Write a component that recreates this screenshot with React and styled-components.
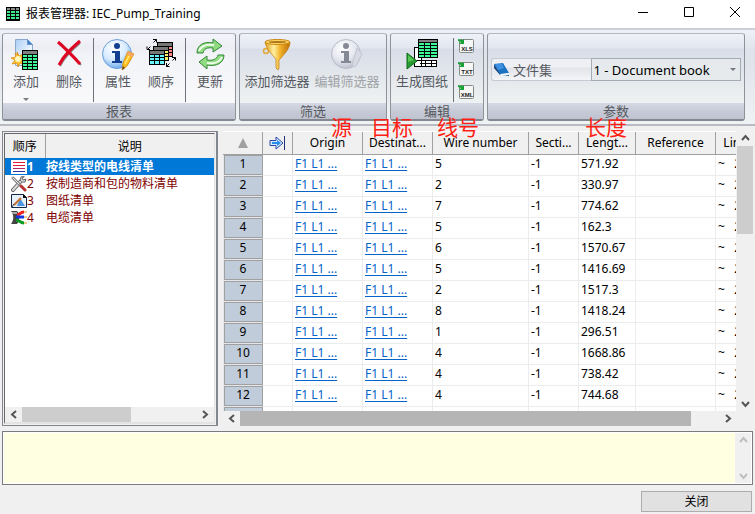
import React from "react";
import styled, { createGlobalStyle, css } from "styled-components";

const GlobalStyle = createGlobalStyle`
  * { box-sizing: border-box; }
  body { margin: 0; background: #f0f0f0; }
  body, button, select, textarea, table {
    font-family: "Noto Sans", "Noto Sans CJK SC", sans-serif;
    font-size: 12px;
    color: #000;
  }
`;

const Window = styled.div`
  display: flex;
  flex-direction: column;
  height: 100vh;
  overflow: hidden;
  background: #f0f0f0;
`;

/* Title bar */
const TitleBar = styled.header`
  display: flex;
  align-items: center;
  flex: none;
  height: 28px;
  padding-left: 6px;
  gap: 6px;
  background: #fff;
`;
const Title = styled.h1`
  flex: 1;
  margin: 0;
  font-size: 12px;
  line-height: 24px;
  font-weight: 400;
`;
const WindowButton = styled.button`
  display: grid;
  place-items: center;
  width: 46px;
  height: 24px;
  padding: 0;
  border: 0;
  background: none;
`;
const WindowButtons = styled.div`
  display: flex;
  align-self: flex-start;
  margin-right: -3px;
`;

/* Ribbon */
const Ribbon = styled.div`
  display: flex;
  flex: none;
  gap: 3px;
  height: 98px;
  padding: 3px 10px 3px 2px;
  border-top: 2px solid #cbcfd8;
  border-bottom: 2px solid #b9bbc3;
  background: linear-gradient(#eef1f7, #dfe3ec 20px, #dfe3ea 30px, #f0f3f4);
`;
const Group = styled.section`
  display: flex;
  flex-direction: column;
  flex: ${(p) => (p.$grow ? 1 : "none")};
  width: ${(p) => (p.$width ? `${p.$width}px` : "auto")};
  border: 1px solid #8f9299;
  border-top-color: #b4b7bf;
  border-bottom: 2px solid #85878e;
  border-radius: 3px;
  background: ${(p) =>
    p.$bright
      ? "linear-gradient(#f3f5fa, #eceef4 14px, #f2f3f7 20px, #fbfbfc)"
      : "linear-gradient(#eff2f9, #e2e6f0 14px, #d8dde8 15px, #e3e7ec 40px, #eff3f2 72px)"};
`;
const GroupBody = styled.div`
  display: flex;
  flex: 1;
  gap: ${(p) => p.$gap || 1}px;
  padding: 4px 3px 0 ${(p) => p.$left || 2}px;
  align-items: ${(p) => (p.$center ? "center" : "flex-start")};
`;
const GroupCaption = styled.h2`
  flex: none;
  height: 16px;
  margin: 0;
  font-size: 13px;
  line-height: 16px;
  font-weight: 400;
  text-align: center;
  color: #55595f;
  background: linear-gradient(#d5d9e4, #c7cbd7 8px, #bfc3cf);
`;
const ToolButton = styled.button`
  display: flex;
  flex-direction: column;
  align-items: center;
  width: ${(p) => p.$width || 42}px;
  padding: 0;
  border: 0;
  background: none;
  font-size: 13px;
  line-height: 20px;
  white-space: nowrap;
  color: ${(p) => (p.disabled ? "#a0a3a8" : "#55595f")};
  svg { flex: none; }
`;
const ToolLabel = styled.span`
  margin-top: 1px;
`;
const DropMark = styled.span`
  margin-top: 7px;
  border: 3px solid transparent;
  border-top-color: #77797e;
  border-bottom: 0;
`;
const Divider = styled.span`
  flex: none;
  width: 1px;
  height: 64px;
  margin: 0 ${(p) => p.$space || 2}px;
  background: #6f727c;
`;
const ExportList = styled.div`
  display: flex;
  flex-direction: column;
  gap: 7px;
`;
const ExportButton = styled.button`
  display: block;
  width: 17px;
  height: 16px;
  padding: 0;
  border: 0;
  background: none;
  svg { display: block; }
`;
const Field = styled.div`
  display: flex;
  flex: 1;
  height: 23px;
  margin-bottom: 2px;
`;
const FieldLabel = styled.label`
  display: flex;
  align-items: center;
  flex: 2;
  gap: 3px;
  padding-left: 1px;
  border: 1px solid #c6cad2;
  border-right: 0;
  border-radius: 3px 0 0 3px;
  background: linear-gradient(#eff0f4 0 8px, #e2e4ea 9px, #f4f5f8);
  font-size: 13px;
  color: #55595f;
`;
const SelectWrap = styled.div`
  display: flex;
  flex: 3;
  align-items: center;
  border: 1px solid #a4abb5;
  background: #e6eaec;
  select {
    appearance: none;
    flex: 1;
    min-width: 0;
    height: 21px;
    padding: 0 0 0 1px;
    border: 0;
    background: none;
    font-size: 13px;
  }
  ${DropMark} { margin: 0 4px 0 0; }
`;

/* Work area */
const Main = styled.main`
  display: flex;
  flex: 1;
  min-height: 0;
  gap: 5px;
  padding: 5px 2px 5px 2px;
`;
const ReportPanel = styled.div`
  display: flex;
  flex-direction: column;
  flex: none;
  width: 216px;
  border: 1px solid #83878f;
  border-right: 2px solid #83878f;
  padding: 1px;
`;
const ReportFrame = styled.div`
  display: flex;
  flex-direction: column;
  flex: 1;
  min-height: 0;
  border-left: 1px solid #696969;
  border-top: 1px solid #696969;
  border-right: 1px solid #e3e3e3;
  border-bottom: 2px solid #e3e3e3;
  background: #fff;
`;
const ReportBody = styled.div`
  flex: 1;
  min-height: 0;
  overflow: hidden;
`;
const ReportTable = styled.table`
  width: 100%;
  table-layout: fixed;
  border-collapse: collapse;
  th {
    height: 24px;
    padding: 0;
    font-weight: 400;
    background: #f0f0f0;
  }
  th:first-child { border-right: 1px solid #a0a0a0; }
  td { height: 17px; padding: 0 0 0 1px; line-height: 17px; white-space: nowrap; }
`;
const ReportRow = styled.tr`
  color: ${(p) => (p.$selected ? "#fff" : "#800000")};
  font-weight: ${(p) => (p.$selected ? 700 : 400)};
  background: ${(p) => (p.$selected ? "#0078d7" : "transparent")};
`;
const ReportNumber = styled.span`
  display: flex;
  align-items: center;
  height: 17px;
  padding-left: 5px;
`;

const GridArea = styled.div`
  position: relative;
  display: flex;
  flex-direction: column;
  flex: 1;
  min-width: 0;
`;
const GridRow = styled.div`
  display: flex;
  flex: 1;
  min-height: 0;
`;
const GridView = styled.div`
  flex: 1;
  min-width: 0;
  overflow: hidden;
  background: #fff;
  border-top: 1px solid #fff;
  border-right: 1px solid #f0f0f0;
`;
const WireTable = styled.table`
  width: 560px;
  table-layout: fixed;
  border-collapse: separate;
  border-spacing: 0;
  th, td { padding: 0; overflow: hidden; white-space: nowrap; }
  thead th {
    height: 23px;
    font-weight: 400;
    line-height: 20px;
    background: #f0f0f0;
    border-right: 1px solid #a0a0a0;
    border-bottom: 1px solid #a0a0a0;
  }
  thead svg { display: block; margin: 0 auto; }
  tbody th {
    height: 21px;
    border-left: 1px solid #e3e6ea;
    border-right: 1px solid #a0a0a0;
    border-bottom: 1px solid #e3e6ea;
    box-shadow: inset 1px 1px #a0a0a0, inset 0 -1px #a0a0a0;
    font-weight: 400;
    line-height: 18px;
    vertical-align: top;
    background: #c0ccda;
  }
  td {
    height: 21px;
    padding-left: 2px;
    line-height: 18px;
    vertical-align: top;
    border-right: 1px solid #ececec;
    border-bottom: 1px solid #ececec;
  }
  a { color: #0563c9; text-decoration: underline; text-underline-offset: 2px; }
`;
const LineTypeCell = styled.td`
  && { white-space: pre; }
`;
const Notes = styled.div`
  position: absolute;
  left: 0;
  top: -16px;
  display: grid;
  grid-template-columns: 108px 40px 66px 148px 50px;
  font-size: 21px;
  line-height: 24px;
  color: #ff1e14;
  pointer-events: none;
  white-space: nowrap;
`;
const Note = styled.span`
  grid-column: ${(p) => p.$col};
`;

/* Scroll bars */
const Scroll = styled.div`
  display: flex;
  flex: none;
  background: #f0f0f0;
  ${(p) =>
    p.$vertical
      ? css`flex-direction: column; width: 16px;`
      : css`height: 15px; margin-right: ${p.$end || 0}px;`}
`;
const ScrollButton = styled.button`
  display: grid;
  place-items: center;
  flex: none;
  width: 17px;
  height: 15px;
  padding: 0;
  border: 0;
  background: none;
  color: ${(p) => (p.disabled ? "#bfbfbf" : "#555")};
`;
const Track = styled.div`
  display: flex;
  flex: 1;
  flex-direction: ${(p) => (p.$vertical ? "column" : "row")};
`;
const Thumb = styled.div`
  flex: 0 0 ${(p) => p.$size};
  background: ${(p) => (p.$dark ? "#b5b5b5" : "#cdcdcd")};
`;

/* Footer */
const MessageBox = styled.div`
  display: flex;
  flex: none;
  height: 54px;
  margin: 0 2px;
  border: 1px solid #7a7c80;
  padding: 1px;
  background: #fff;
  textarea {
    flex: 1;
    min-width: 0;
    border: 0;
    resize: none;
    outline: 0;
    background: #ffffe1;
  }
`;
const Footer = styled.footer`
  display: flex;
  justify-content: flex-end;
  flex: none;
  padding: 6px 3px 2px;
`;
const CloseButton = styled.button`
  width: 111px;
  height: 21px;
  padding: 0;
  border: 1px solid #adadad;
  background: #e1e1e1;
  line-height: 19px;
`;

const SHEET_ROWS = [0, 1, 2, 3, 4];

const SheetIcon = ({ x = 0, y = 0 }) => (
  <g transform={`translate(${x} ${y})`} shapeRendering="crispEdges">
    <rect width="16" height="20" fill="#000" />
    <rect x="1" y="1" width="14" height="3" fill="#808080" />
    {SHEET_ROWS.map((r) =>
      [1, 6, 11].map((c) => (
        <rect key={`${r}${c}`} x={c} y={5 + r * 3} width="4" height="2" fill="#3dfa98" />
      ))
    )}
  </g>
);

const AppIcon = () => (
  <svg width="14" height="14" viewBox="0 0 14 14" shapeRendering="crispEdges">
    <rect width="14" height="14" fill="#000" />
    <path d="M1 1h3v2H1zM5 1h4v2H5zM10 1h3v2h-3z" fill="#8a8a8a" />
    {[4, 7, 10].map((y) => (
      <path key={y} d={`M1 ${y}h3v2H1zM5 ${y}h4v2H5zM10 ${y}h3v2h-3z`} fill="#3dea90" />
    ))}
  </svg>
);

const AddIcon = () => (
  <svg width="32" height="32" viewBox="0 0 32 32">
    <defs>
      <linearGradient id="page" x1="0" y1="0" x2="1" y2="1">
        <stop offset="0" stopColor="#aacdf6" />
        <stop offset=".6" stopColor="#e9f4ff" />
        <stop offset="1" stopColor="#fff" />
      </linearGradient>
    </defs>
    <path d="M5.500 1.500h12l5 5v21h-17z" fill="url(#page)" stroke="#8ba9cf" />
    <path d="M17.500 1.500v5h5z" fill="#3f83d3" stroke="#6b94c9" />
    <path d="M7 14l2 4 4-2-1 4 5 1-5 2 2 4-4-2-2 4-1-4-5 1 3-4-4-2 5-1-1-4 3 2z" fill="#ffc52b" stroke="#de8a17" strokeWidth=".8" />
    <circle cx="8" cy="21" r="3" fill="#fff7bd" />
    <SheetIcon x={12} y={12} />
  </svg>
);

const DeleteIcon = () => (
  <svg width="32" height="32" viewBox="0 0 32 32" fill="none">
    <path d="M7 5l21 22M27 5C20 11 12 18 7 28" stroke="#888" strokeWidth="2" />
    <path d="M5 4c7 6 14 13 22 22" stroke="#df0824" strokeWidth="3" />
    <path d="M27 3C19 10 11 17 6 27" stroke="#df0824" strokeWidth="3" />
  </svg>
);

const InfoIcon = ({ muted }) => (
  <svg width="34" height="32" viewBox="0 0 34 32">
    <defs>
      <radialGradient id={muted ? "ballGrey" : "ballBlue"} cx=".4" cy=".3" r=".75">
        <stop offset="0" stopColor="#fff" />
        <stop offset=".55" stopColor={muted ? "#e6e8f0" : "#d8ebff"} />
        <stop offset="1" stopColor={muted ? "#b9bdca" : "#5ca2e8"} />
      </radialGradient>
    </defs>
    <circle cx="16" cy="16" r="14.500" fill={`url(#${muted ? "ballGrey" : "ballBlue"})`} stroke={muted ? "#b9bcc8" : "#6c9fd8"} />
    <circle cx="16" cy="8" r="3" fill={muted ? "#858996" : "#133f91"} />
    <path d="M11 13h8v10h2v2H11v-2h3v-8h-3z" fill={muted ? "#858996" : "#133f91"} />
    {muted ? (
      <path d="M27 10l5 6-6 12-4 1 1-6z" fill="#d7d9e3" stroke="#bdc0cc" strokeWidth=".8" />
    ) : (
      <g>
        <path d="M27 13l6 3-7 12-5 4 1-7z" fill="#ffbf1e" stroke="#d48a0f" strokeWidth=".8" />
        <path d="M27 13l6 3-2 3-6-3z" fill="#f3a565" />
        <path d="M21 32l1-4 2 2z" fill="#634315" />
        <path d="M28 18l-4 8" stroke="#ffe578" strokeWidth="1.500" />
      </g>
    )}
  </svg>
);

const MiniSheet = ({ x, y, fill }) => (
  <g transform={`translate(${x} ${y})`} shapeRendering="crispEdges">
    <rect width="16" height="15" fill="#000" />
    <rect x="1" y="1" width="14" height="3" fill="#777" />
    {[5, 8, 11].map((r) =>
      [1, 6, 11].map((c) => (
        <rect key={`${r}${c}`} x={c} y={r} width="4" height={r === 11 ? 3 : 2} fill={fill} />
      ))
    )}
  </g>
);

const OrderIcon = () => (
  <svg width="32" height="32" viewBox="0 0 32 32">
    <MiniSheet x={12} y={4} fill="#ff8585" />
    <MiniSheet x={8} y={8} fill="#fff06a" />
    <MiniSheet x={4} y={12} fill="#68f4ff" />
    <g fill="none" stroke="#000" strokeDasharray="2 0">
      <path d="M2.500 11.500l3-3M2 8.500v3h3M8.500 4.500l3-3M8 1.500h3.500v3" />
      <path d="M21.500 28.500l3-3M21.500 25v3.500h3M27.500 22.500l3-3M27 19.500h3.500v3" />
    </g>
  </svg>
);

const RefreshIcon = () => (
  <svg width="32" height="32" viewBox="0 0 32 32" fill="#8fdc80" stroke="#34853a" strokeLinejoin="round">
    <path d="M3 15C3 7 10 3 19 5V1l9 7-9 6v-4C13 9 10 11 9 15z" />
    <path d="M30 17c0 8-8 12-17 10v4l-8-7 8-6v4c6 1 10-1 11-5z" />
    <path d="M5 13c2-5 8-7 15-6M28 19c-2 5-8 7-15 6" fill="none" stroke="#effbea" strokeWidth="2" />
  </svg>
);

const FunnelIcon = () => (
  <svg width="32" height="32" viewBox="0 0 32 32">
    <defs>
      <linearGradient id="brass">
        <stop offset="0" stopColor="#e29b19" />
        <stop offset=".35" stopColor="#fff0a0" />
        <stop offset=".6" stopColor="#f4b42c" />
        <stop offset="1" stopColor="#b96d04" />
      </linearGradient>
    </defs>
    <circle cx="5" cy="13" r="2.500" fill="none" stroke="#e3a83a" strokeWidth="1.500" />
    <path d="M4 4c1 6 5 10 10 16l1 2v8l2 2 1-2v-8l2-2c5-6 9-10 9-16z" fill="url(#brass)" stroke="#c17c0d" strokeWidth=".7" />
    <ellipse cx="16.500" cy="4" rx="12.500" ry="2.500" fill="#ffd663" stroke="#c88715" />
    <ellipse cx="16.500" cy="4" rx="9" ry="1" fill="#ad7617" />
  </svg>
);

const DrawingIcon = () => (
  <svg width="32" height="32" viewBox="0 0 32 32">
    <g shapeRendering="crispEdges">
      <path d="M8.500 9.500h7v19h-7zM8.500 22.500h22v6h-22M14 25.500h16M19.500 22v6M25.500 22v6" fill="#fff" stroke="#000" />
      <rect x="12" y="1" width="20" height="19" />
      <path d="M13 2h18v2H13z" fill="#808080" />
      {[5, 8, 11, 14, 17].map((y) => (
        <path key={y} d={`M13 ${y}h5v2h-5zM19 ${y}h5v2h-5zM25 ${y}h6v2h-6z`} fill="#3dfa98" />
      ))}
    </g>
    <path d="M1 15l10 8-10 8z" fill="#279b31" stroke="#11691b" />
    <path d="M2 17l6 5-6 2z" fill="#5ac653" />
  </svg>
);

const ExportIcon = ({ label }) => (
  <svg width="17" height="16" viewBox="0 0 17 16">
    <rect x="2.500" y="1.500" width="14" height="13" rx="1" fill="#f5f6f5" stroke="#858b87" />
    <path d="M1 1l5 1 1-1v5H2l2-2-3-1z" fill="#19a135" />
    <text x="10" y="13" textAnchor="middle" fontFamily="Liberation Sans, sans-serif" fontSize="6" fontWeight="700" fill="#222">
      {label}
    </text>
  </svg>
);

const BookIcon = () => (
  <svg width="17" height="16" viewBox="0 0 17 16">
    <path d="M1 2v4l6 7 9 1v-2L7 11z" fill="#14467b" />
    <path d="M1 2l9-1 6 10-9 1z" fill="#1c72c3" />
    <path d="M2 2l7 0 2 4-6 2z" fill="#3f90e0" />
    <path d="M7 12l9-1v2l-8 1z" fill="#f2f7fc" />
  </svg>
);

const WireListIcon = () => (
  <svg width="16" height="14" viewBox="0 0 16 14" shapeRendering="crispEdges">
    <path d="M0 0h16v14H0z" fill="#fff" />
    <path d="M2 2h12v1H2zM2 5h12v1H2z" fill="#e01c3a" />
    <path d="M2 8h12v1H2z" fill="#b42b62" />
    <path d="M2 11h12v1H2z" fill="#26359b" />
  </svg>
);
const ToolsIcon = () => (
  <svg width="16" height="16" viewBox="0 0 16 16" fill="none" strokeLinecap="round">
    <path d="M2 14l8-9" stroke="#666" strokeWidth="4" />
    <path d="M2 14l8-9" stroke="#ddd" strokeWidth="2" />
    <path d="M10 1c-2 3 0 6 4 5l1-3-3 1-1-2 2-1z" fill="#d7dadd" stroke="#666" />
    <path d="M2 2l6 6" stroke="#888" strokeWidth="3" />
    <path d="M2 2l6 6" stroke="#e7e7e7" />
    <path d="M10 10l4 4" stroke="#b83131" strokeWidth="3" />
  </svg>
);
const SketchIcon = () => (
  <svg width="16" height="14" viewBox="0 0 16 14">
    <path d="M.5.500h12l3 3v10H.500z" fill="#e6f1fc" stroke="#172949" />
    <path d="M12 0v4h4z" fill="#111" />
    <path d="M9 4l5 8H6z" fill="#4d95dc" />
    <path d="M3 11l7-7" stroke="#c86e28" strokeWidth="2" />
    <path d="M1 13l2-3" stroke="#333" />
  </svg>
);
const CableIcon = () => (
  <svg width="16" height="15" viewBox="0 0 16 15" fill="none">
    <path d="M0 1h6c3 3 3 9 0 13H0c3-4 3-9 0-13z" fill="#444" />
    <path d="M1 3h5" stroke="#aaa" strokeWidth="2" />
    <path d="M6 5c3 0 3-3 7-3" stroke="#f02020" strokeWidth="3" />
    <path d="M5 7h8" stroke="#1238e0" strokeWidth="3" />
    <path d="M5 10c3 0 4 3 8 3" stroke="#0b9b22" strokeWidth="3" />
    <path d="M13 2h3M13 7h3M13 13h3" stroke="#dd9b24" />
  </svg>
);

const SortIcon = () => (
  <svg width="12" height="10" viewBox="0 0 12 10">
    <path d="M6 0l5 10H1z" fill="#a0a0a0" />
  </svg>
);
const JumpIcon = () => (
  <svg width="17" height="14" viewBox="0 0 17 14">
    <path d="M1 4.500h6V1l7 6-7 6V9.500H1z" fill="#dcecff" stroke="#2747a8" />
    <path d="M3 6h5V4l4 3-4 3V8H3z" fill="#278cea" />
    <path d="M15.500 0v14" stroke="#20307d" />
  </svg>
);

const CHEVRONS = {
  left: "M7 1L3 4.500 7 8",
  right: "M2 1l4 3.500L2 8",
  up: "M1 6l3.500-4L8 6",
  down: "M1 3l3.500 4L8 3",
};
const Chevron = ({ dir }) => (
  <svg width="9" height="9" viewBox="0 0 9 9">
    <path d={CHEVRONS[dir]} fill="none" stroke="currentColor" strokeWidth="2" />
  </svg>
);

const reports = [
  [WireListIcon, "按线类型的电线清单"],
  [ToolsIcon, "按制造商和包的物料清单"],
  [SketchIcon, "图纸清单"],
  [CableIcon, "电缆清单"],
];

const wires = [
  ["5", "571.92"],
  ["2", "330.97"],
  ["7", "774.62"],
  ["5", "162.3"],
  ["6", "1570.67"],
  ["5", "1416.69"],
  ["2", "1517.3"],
  ["8", "1418.24"],
  ["1", "296.51"],
  ["4", "1668.86"],
  ["4", "738.42"],
  ["4", "744.68"],
  ["", ""],
];

const columnWidths = [40, 30, 70, 70, 96, 50, 57, 80, 67];

export default function App() {
  return (
    <Window>
      <GlobalStyle />
      <TitleBar>
        <AppIcon />
        <Title>报表管理器: IEC_Pump_Training</Title>
        <WindowButtons>
          <WindowButton aria-label="最小化">
            <svg width="11" height="11"><path d="M0 5.500h10" stroke="#000" /></svg>
          </WindowButton>
          <WindowButton aria-label="最大化">
            <svg width="11" height="11"><path d="M.5.500h9v9h-9z" fill="none" stroke="#000" /></svg>
          </WindowButton>
          <WindowButton aria-label="关闭窗口">
            <svg width="11" height="11"><path d="M0 0l10 10M10 0L0 10" stroke="#000" /></svg>
          </WindowButton>
        </WindowButtons>
      </TitleBar>

      <Ribbon>
        <Group $width={234} $bright>
          <GroupBody>
            <ToolButton><AddIcon /><ToolLabel>添加</ToolLabel><DropMark /></ToolButton>
            <ToolButton><DeleteIcon /><ToolLabel>删除</ToolLabel></ToolButton>
            <Divider />
            <ToolButton><InfoIcon /><ToolLabel>属性</ToolLabel></ToolButton>
            <ToolButton><OrderIcon /><ToolLabel>顺序</ToolLabel></ToolButton>
            <Divider />
            <ToolButton><RefreshIcon /><ToolLabel>更新</ToolLabel></ToolButton>
          </GroupBody>
          <GroupCaption>报表</GroupCaption>
        </Group>
        <Group $width={148}>
          <GroupBody $gap={2} $left={3}>
            <ToolButton $width={68}><FunnelIcon /><ToolLabel>添加筛选器</ToolLabel></ToolButton>
            <ToolButton $width={68} disabled><InfoIcon muted /><ToolLabel>编辑筛选器</ToolLabel></ToolButton>
          </GroupBody>
          <GroupCaption>筛选</GroupCaption>
        </Group>
        <Group $width={94}>
          <GroupBody $left={3}>
            <ToolButton $width={56}><DrawingIcon /><ToolLabel>生成图纸</ToolLabel></ToolButton>
            <Divider $space={2} />
            <ExportList>
              <ExportButton aria-label="XLS"><ExportIcon label="XLS" /></ExportButton>
              <ExportButton aria-label="TXT"><ExportIcon label="TXT" /></ExportButton>
              <ExportButton aria-label="XML"><ExportIcon label="XML" /></ExportButton>
            </ExportList>
          </GroupBody>
          <GroupCaption>编辑</GroupCaption>
        </Group>
        <Group $grow>
          <GroupBody $left={3} $center>
            <Field>
              <FieldLabel htmlFor="book"><BookIcon />文件集</FieldLabel>
              <SelectWrap>
                <select id="book"><option>1 - Document book</option></select>
                <DropMark />
              </SelectWrap>
            </Field>
          </GroupBody>
          <GroupCaption>参数</GroupCaption>
        </Group>
      </Ribbon>

      <Main>
        <ReportPanel>
          <ReportFrame>
            <ReportBody>
              <ReportTable>
                <colgroup><col width="40" /><col /></colgroup>
                <thead><tr><th>顺序</th><th>说明</th></tr></thead>
                <tbody>
                  {reports.map(([Icon, name], i) => (
                    <ReportRow key={name} $selected={i === 0}>
                      <td><ReportNumber><Icon />{i + 1}</ReportNumber></td>
                      <td>{name}</td>
                    </ReportRow>
                  ))}
                </tbody>
              </ReportTable>
            </ReportBody>
            <Scroll>
              <ScrollButton aria-label="向左"><Chevron dir="left" /></ScrollButton>
              <Track><Thumb $size="62%" /></Track>
              <ScrollButton aria-label="向右"><Chevron dir="right" /></ScrollButton>
            </Scroll>
          </ReportFrame>
        </ReportPanel>

        <GridArea>
          <GridRow>
            <GridView>
              <WireTable>
                <colgroup>{columnWidths.map((w, i) => <col key={i} width={w} />)}</colgroup>
                <thead>
                  <tr>
                    <th><SortIcon /></th>
                    <th><JumpIcon /></th>
                    <th>Origin</th>
                    <th>Destinat...</th>
                    <th>Wire number</th>
                    <th>Secti...</th>
                    <th>Lengt...</th>
                    <th>Reference</th>
                    <th>Line type</th>
                  </tr>
                </thead>
                <tbody>
                  {wires.map(([number, length], i) => (
                    <tr key={i}>
                      <th>{number && i + 1}</th>
                      <td />
                      <td>{number && <a href="#origin">F1 L1 ...</a>}</td>
                      <td>{number && <a href="#destination">F1 L1 ...</a>}</td>
                      <td>{number}</td>
                      <td>{number && "-1"}</td>
                      <td>{length}</td>
                      <td />
                      <LineTypeCell>{number && "~   24V"}</LineTypeCell>
                    </tr>
                  ))}
                </tbody>
              </WireTable>
            </GridView>
            <Scroll $vertical>
              <ScrollButton aria-label="向上"><Chevron dir="up" /></ScrollButton>
              <Track $vertical><Thumb $size="35%" /></Track>
              <ScrollButton aria-label="向下"><Chevron dir="down" /></ScrollButton>
            </Scroll>
          </GridRow>
          <Scroll $end={16}>
            <ScrollButton aria-label="向左"><Chevron dir="left" /></ScrollButton>
            <Track><Thumb $size="94%" $dark /></Track>
            <ScrollButton aria-label="向右"><Chevron dir="right" /></ScrollButton>
          </Scroll>
          <Notes>
            <Note $col={2}>源</Note>
            <Note $col={3}>目标</Note>
            <Note $col={4}>线号</Note>
            <Note $col={5}>长度</Note>
          </Notes>
        </GridArea>
      </Main>

      <MessageBox>
        <textarea aria-label="说明" readOnly />
        <Scroll $vertical>
          <ScrollButton aria-label="向上" disabled><Chevron dir="up" /></ScrollButton>
          <Track $vertical />
          <ScrollButton aria-label="向下" disabled><Chevron dir="down" /></ScrollButton>
        </Scroll>
      </MessageBox>
      <Footer><CloseButton>关闭</CloseButton></Footer>
    </Window>
  );
}
